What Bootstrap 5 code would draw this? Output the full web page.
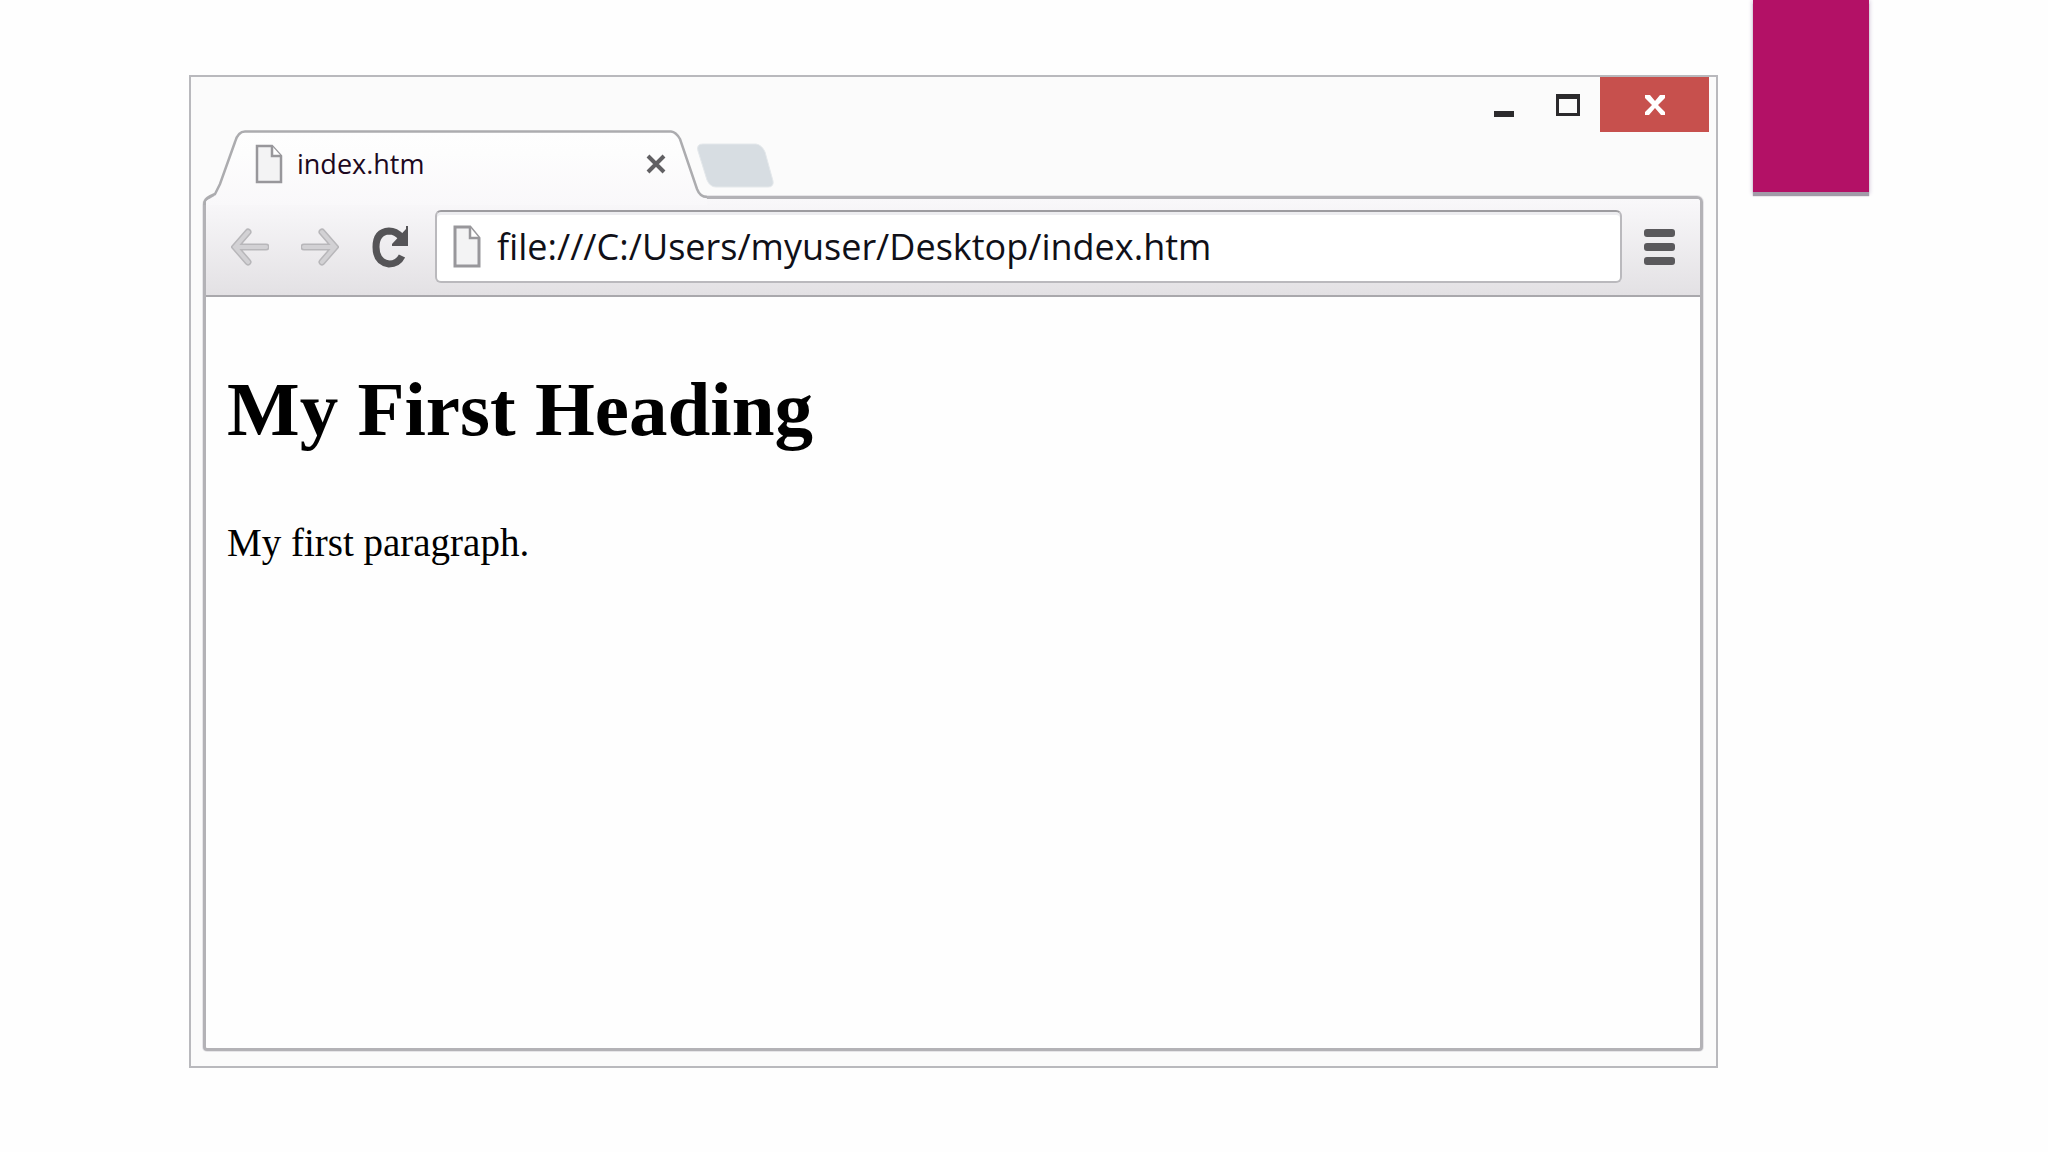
<!DOCTYPE html>
<html lang="en">
<head>
<meta charset="utf-8">
<meta name="viewport" content="width=device-width, initial-scale=1">
<title>My First Heading</title>
<link href="https://cdn.jsdelivr.net/npm/bootstrap@5.3.0/dist/css/bootstrap.min.css" rel="stylesheet">
<style>
body { background: #fefefe; font-family: "Open Sans", "Noto Sans", sans-serif; color: #000; }
.slide { padding-left: 189px; padding-right: 179px; gap: 35px; }
.ribbon { width: 116px; height: 192px; background: #b31166; box-shadow: 0 4px 1px #a29ba8, 0 1px 4px 1px #d9cfe0; }
.browser { margin: 75px 0 84px; border: 2px solid #b9b9bd; background: #fbfbfb; padding-bottom: 15px; }
.titlebar { padding-left: 12px; padding-right: 7px; height: 119px; }
.tab { width: 504px; height: 66px; padding-left: 52px; padding-right: 41px; padding-top: 2px; font-size: 27px; }
.tab-shape { left: 0; top: 0; z-index: 1; pointer-events: none; }
.tab-link { color: #1c0820; gap: 14px; z-index: 2; line-height: 36px; }
.plain { background: none; border: 0; padding: 0; line-height: 0; }
.close-tab { z-index: 2; }
.new-tab { margin-left: -11px; margin-bottom: 8px; z-index: 2; }
.winbtn { height: 55px; width: 64px; }
.winbtn-close { width: 109px; background: #c7504d; }
.pane { margin: 0 13px 0 12px; border: 3px solid #b3b2b6; border-radius: 9px 6px 4px 4px; box-shadow: 0 0 0 1px #e6e5e8; background: #fefefe; }
.toolbar { height: 98px; padding: 11px 25px 12px 25px; background: linear-gradient(#f9f8fa, #e3e1e4); border-bottom: 2px solid #a9a8ac; border-radius: 5px 3px 0 0; }
.navset { gap: 32px; margin-right: 26px; }
.omnibox { height: 73px; border: 2px solid #bab9bd; border-top: 2px solid #9d9ca0; border-radius: 6px; background: #fff; box-shadow: inset 0 3px 0 #ededf0; padding-left: 16px; gap: 16px; margin-right: 22px; }
.omnibox input { border: 0; outline: 0; background: none; font-size: 36px; line-height: 48px; color: #101018; padding: 0; min-width: 0; }
.document { font-family: "Liberation Serif", serif; padding: 68px 21px; }
.document h1 { font-size: 77px; line-height: 88px; font-weight: 700; margin-bottom: 67px; }
.document p { font-size: 39px; line-height: 46px; margin: 0; }
</style>
<script src="https://cdn.jsdelivr.net/npm/bootstrap@5.3.0/dist/js/bootstrap.bundle.min.js" defer></script>
</head>
<body>
<div class="slide d-flex align-items-start min-vh-100">
  <main class="browser flex-grow-1 align-self-stretch d-flex flex-column">
    <header class="titlebar d-flex justify-content-between">
      <nav class="d-flex align-items-end align-self-end" aria-label="Tabs">
        <div class="tab position-relative d-flex align-items-center justify-content-between">
          <svg class="tab-shape position-absolute" width="504" height="75" viewBox="0 0 504 75" aria-hidden="true">
            <defs><linearGradient id="tabfill" x1="0" y1="0" x2="0" y2="1"><stop offset="0" stop-color="#fefefe"/><stop offset=".3" stop-color="#fdfdfd"/><stop offset="1" stop-color="#f9f8fa"/></linearGradient></defs>
            <path d="M3 75V71L13 65 18 52 32 12Q35 1 42 1H468Q473 1 477 9L494 59Q497 67 504 67V69H504V75Z" fill="url(#tabfill)"/>
            <path d="M1.500 75V72Q2 68 12 64L17 54 32 12Q35 1.500 42 1.500H468Q473 2 477 9L494 59Q497 67 504 67" fill="none" stroke="#acacaf" stroke-width="2.500"/>
          </svg>
          <a class="tab-link position-relative d-flex align-items-center text-decoration-none" href="#">
            <svg width="28" height="40" viewBox="0 0 28 40" aria-hidden="true"><path d="M2 2H17L26 12V38H2Z" fill="#f3f3f4" stroke="#98979b" stroke-width="2.500"/><path d="M17 2V12H26" fill="#fff" stroke="#98979b" stroke-width="2.500"/></svg>
            <span>index.htm</span>
          </a>
          <button class="plain close-tab position-relative" type="button" aria-label="Close tab">
            <svg width="20" height="20" viewBox="0 0 20 20"><path d="M2 2 18 18M18 2 2 18" stroke="#616063" stroke-width="4"/></svg>
          </button>
        </div>
        <button class="plain new-tab position-relative" type="button" aria-label="New tab">
          <svg width="79" height="45" viewBox="0 0 79 45"><path d="M7 1H60Q66 2 69 9L77 38Q78 44 72 44H20Q14 44 11 37L2 8Q0 1 7 1Z" fill="#d7dde2" stroke="#e4e8eb"/></svg>
        </button>
      </nav>
      <div class="d-flex align-items-start">
        <button class="plain winbtn" type="button" aria-label="Minimize"><svg width="20" height="24" viewBox="0 0 20 24"><path d="M0 18H20V24H0Z" fill="#2b2a2c"/></svg></button>
        <button class="plain winbtn" type="button" aria-label="Maximize"><svg width="26" height="24" viewBox="0 0 26 24"><path fill-rule="evenodd" d="M1 1H25V23H1ZM4 6V20H22V6Z" fill="#2b2a2c"/></svg></button>
        <button class="plain winbtn winbtn-close" type="button" aria-label="Close"><svg width="22" height="20" viewBox="0 0 22 20"><path d="M1 0H6L11 6 16 0H21V3L14 10 21 17V20H17L11 13 5 20H1V17L8 10 1 3Z" fill="#fff"/></svg></button>
      </div>
    </header>
    <section class="pane flex-grow-1">
      <div class="toolbar d-flex align-items-center">
        <div class="navset d-flex align-items-center">
          <button class="plain" type="button" aria-label="Back"><svg width="38" height="38" viewBox="0 0 38 38" fill="none" stroke-linecap="round"><path d="M17 4 4 19 17 34M5 19H35" stroke="#b8b7ba" stroke-width="7"/><path d="M17 4 4 19 17 34M5 19H35" stroke="#d2d1d4" stroke-width="4"/></svg></button>
          <button class="plain" type="button" aria-label="Forward"><svg width="38" height="38" viewBox="0 0 38 38" fill="none" stroke-linecap="round"><path d="M21 4 34 19 21 34M33 19H3" stroke="#b8b7ba" stroke-width="7"/><path d="M21 4 34 19 21 34M33 19H3" stroke="#d2d1d4" stroke-width="4"/></svg></button>
          <button class="plain" type="button" aria-label="Reload"><svg width="38" height="44" viewBox="0 0 38 44"><path d="M31 31Q27 39 18 39Q5 37 5 22Q5 7 18 6Q25 6 30 12" fill="none" stroke="#555457" stroke-width="7"/><path d="M37 1V21H21V19L35 4V1Z" fill="#555457"/></svg></button>
        </div>
        <label class="omnibox flex-grow-1 d-flex align-items-center" for="address">
          <svg width="28" height="44" viewBox="0 0 28 44" aria-hidden="true"><path d="M2 2H17L26 13V41H2Z" fill="#f3f3f4" stroke="#98979b" stroke-width="3"/><path d="M17 2V13H26" fill="#fff" stroke="#98979b" stroke-width="2.500"/></svg>
          <input id="address" class="flex-grow-1" type="text" value="file:///C:/Users/myuser/Desktop/index.htm" aria-label="Address">
        </label>
        <button class="plain" type="button" aria-label="Menu"><svg width="31" height="38" viewBox="0 0 31 38" fill="#5a595c"><rect y="1" width="31" height="8" rx="3"/><rect y="15" width="31" height="8" rx="3"/><rect y="29" width="31" height="8" rx="3"/></svg></button>
      </div>
      <article class="document">
        <h1>My First Heading</h1>
        <p>My first paragraph.</p>
      </article>
    </section>
  </main>
  <div class="ribbon flex-shrink-0"></div>
</div>
</body>
</html>
